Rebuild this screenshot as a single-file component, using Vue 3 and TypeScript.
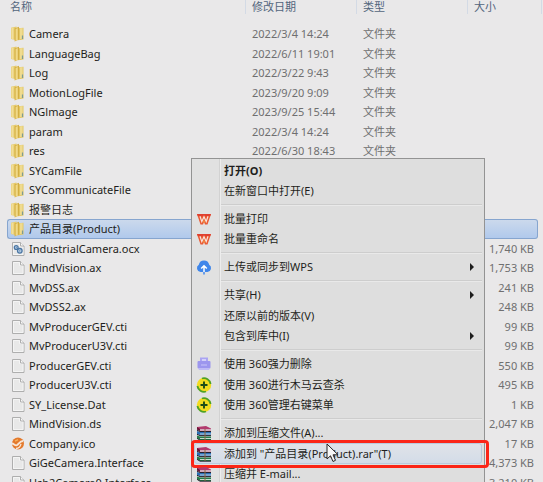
<script setup lang="ts">
type FileKind = 'folder' | 'file' | 'control' | 'brand'

interface FileRow {
  name: string
  kind: FileKind
  date?: string
  type?: string
  size?: string
}

interface MenuEntry {
  label: string
  icon?: 'wps' | 'cloud' | 'shredder' | 'shield' | 'archive'
  strong?: boolean
  submenu?: boolean
  active?: boolean
}

const selectedName = '产品目录(Product)'

const files: FileRow[] = [
  { name: 'Camera', kind: 'folder', date: '2022/3/4 14:24', type: '文件夹' },
  { name: 'LanguageBag', kind: 'folder', date: '2022/6/11 19:01', type: '文件夹' },
  { name: 'Log', kind: 'folder', date: '2022/3/22 9:43', type: '文件夹' },
  { name: 'MotionLogFile', kind: 'folder', date: '2023/9/20 9:09', type: '文件夹' },
  { name: 'NGlmage', kind: 'folder', date: '2023/9/25 15:44', type: '文件夹' },
  { name: 'param', kind: 'folder', date: '2022/3/4 14:24', type: '文件夹' },
  { name: 'res', kind: 'folder', date: '2022/6/30 18:43', type: '文件夹' },
  { name: 'SYCamFile', kind: 'folder' },
  { name: 'SYCommunicateFile', kind: 'folder' },
  { name: '报警日志', kind: 'folder' },
  { name: selectedName, kind: 'folder' },
  { name: 'IndustrialCamera.ocx', kind: 'control', size: '1,740 KB' },
  { name: 'MindVision.ax', kind: 'file', size: '1,753 KB' },
  { name: 'MvDSS.ax', kind: 'file', size: '241 KB' },
  { name: 'MvDSS2.ax', kind: 'file', size: '248 KB' },
  { name: 'MvProducerGEV.cti', kind: 'file', size: '99 KB' },
  { name: 'MvProducerU3V.cti', kind: 'file', size: '99 KB' },
  { name: 'ProducerGEV.cti', kind: 'file', size: '550 KB' },
  { name: 'ProducerU3V.cti', kind: 'file', size: '495 KB' },
  { name: 'SY_License.Dat', kind: 'file', size: '1 KB' },
  { name: 'MindVision.ds', kind: 'file', size: '2,047 KB' },
  { name: 'Company.ico', kind: 'brand', size: '17 KB' },
  { name: 'GiGeCamera.Interface', kind: 'file', size: '4,373 KB' },
  { name: 'Usb2Camera0.Interface', kind: 'file', size: '3,210 KB' },
]

const menuGroups: MenuEntry[][] = [
  [{ label: '打开(O)', strong: true }, { label: '在新窗口中打开(E)' }],
  [
    { label: '批量打印', icon: 'wps' },
    { label: '批量重命名', icon: 'wps' },
  ],
  [{ label: '上传或同步到WPS', icon: 'cloud', submenu: true }],
  [
    { label: '共享(H)', submenu: true },
    { label: '还原以前的版本(V)' },
    { label: '包含到库中(I)', submenu: true },
  ],
  [
    { label: '使用 360强力删除', icon: 'shredder' },
    { label: '使用 360进行木马云查杀', icon: 'shield' },
    { label: '使用 360管理右键菜单', icon: 'shield' },
  ],
  [
    { label: '添加到压缩文件(A)...', icon: 'archive' },
    { label: '添加到 "产品目录(Product).rar"(T)', icon: 'archive', active: true },
    { label: '压缩并 E-mail...', icon: 'archive' },
  ],
]
</script>

<template>
  <main class="explorer">
    <table class="files">
      <colgroup>
        <col />
        <col class="col-wide" />
        <col class="col-wide" />
        <col class="col-size" />
      </colgroup>
      <thead>
        <tr>
          <th scope="col"><span>名称</span></th>
          <th scope="col"><span>修改日期</span></th>
          <th scope="col"><span>类型</span></th>
          <th scope="col"><span>大小</span></th>
        </tr>
      </thead>
      <tbody>
        <tr v-for="f in files" :key="f.name" :class="{ selected: f.name === selectedName }">
          <td>
            <div class="name">
              <svg v-if="f.kind === 'folder'" class="icon" viewBox="0 0 16 16">
                <path d="M1 1.800 6.500.6v13.600L1 13z" fill="#e6cb6c" />
                <path d="M1.400 2 3.500 1.600v11.600l-2.100-.4z" fill="#f1de9a" />
                <path d="M8 2.200 13.500 1.800v11.800L8 14.200z" fill="#e2c561" />
                <path d="M10 2.200 12.600 2v10.600L10 13z" fill="#efdb90" />
                <path d="M4.600 2.600 9 .8v12.800l-4.400 1.900z" fill="#d3ae42" />
                <path d="M5.600 3 7.800 2v12l-2.200 1z" fill="#f0d988" />
                <path d="M12.500 9.500V13" stroke="#7f9b91" stroke-width="1.200" />
              </svg>
              <svg v-else-if="f.kind === 'brand'" class="icon" viewBox="0 0 16 16">
                <circle cx="8" cy="7.500" r="6" fill="#e4792c" />
                <path d="M2 7.500c2 .2 2.600 2.200 4.500 1.800C9 8.800 9.200 5 13 5" fill="none" stroke="#f7e5d5" stroke-width="1.800" />
                <path d="M6 12.500c3.500-.2 4.500-2.200 5-4.600" fill="none" stroke="#f7e5d5" stroke-width="1.300" />
                <path d="M5 5.200 8 3.700" stroke="#f4b35c" stroke-width="1.500" />
              </svg>
              <svg v-else class="icon" viewBox="0 0 16 16">
                <path d="M2.500 1.500h8l3.500 3.500v9.500H2.500z" fill="#e8e8e8" stroke="#aeaeae" />
                <path d="M3.500 2.500h6v3h3.500v8H3.500z" fill="none" stroke="#f4f4f4" />
                <path d="M10.500 1.500v3.500H14" fill="#f8f8f8" stroke="#aeaeae" />
                <g v-if="f.kind === 'control'" fill="#c3d7ea" stroke="#4a76a4" stroke-width="1.300">
                  <circle cx="6.200" cy="6.500" r="1.900" />
                  <circle cx="9.800" cy="9.800" r="2.300" />
                  <path d="M9.300 9.800h1M5.800 6.500h.8" />
                </g>
              </svg>
              <span>{{ f.name }}</span>
            </div>
          </td>
          <td>{{ f.date }}</td>
          <td>{{ f.type }}</td>
          <td class="size">{{ f.size }}</td>
        </tr>
      </tbody>
    </table>

    <nav class="menu" aria-label="右键菜单">
      <ul v-for="(group, g) in menuGroups" :key="g" class="group">
        <li v-for="item in group" :key="item.label" :class="{ active: item.active }">
          <button type="button" :class="{ strong: item.strong }">
            <span class="gutter">
              <svg v-if="item.icon === 'wps'" class="icon" viewBox="0 0 16 16">
                <path d="M1 3h14l-3.500 10.500H9L8 11l-1 2.500H4.500z" fill="#ea5a34" />
                <path d="M1 3h14l-.8 2.300H1.800z" fill="#e0402f" />
                <path d="M4 5.300 5.800 10.700 8 5.800l2.200 4.900L12 5.300" fill="none" stroke="#f9e4dc" stroke-width="1.200" />
                <path d="m8 8.300 1.400 3.200h-2.800z" fill="#f08c3c" />
              </svg>
              <svg v-else-if="item.icon === 'cloud'" class="icon" viewBox="0 0 16 16">
                <path d="M4.500 13A3.900 3.900 0 0 1 2.800 5.800 5.300 5.300 0 0 1 13.200 5.800 3.900 3.900 0 0 1 11.500 13z" fill="#3f86ea" />
                <path d="M8 13.500V7M5.200 9.500 8 6.700l2.800 2.800" fill="none" stroke="#fff" stroke-width="1.500" />
                <path d="M8 13v2.500" stroke="#3f86ea" stroke-width="1.500" />
              </svg>
              <svg v-else-if="item.icon === 'shredder'" class="icon" viewBox="0 0 16 16">
                <path d="M4 1.500h8V6H4z" fill="#aaa4f2" />
                <path d="M6 3h4v3H6z" fill="#d4d1f9" />
                <rect x="1.500" y="5" width="13" height="7.500" rx="1" fill="#9c96ee" />
                <path d="M2 12h12l-1 2H3z" fill="#bfbbf5" />
                <path d="M5 9h6" stroke="#c9c6f8" />
              </svg>
              <svg v-else-if="item.icon === 'shield'" class="icon" viewBox="0 0 16 16">
                <circle cx="8" cy="8" r="7.200" fill="#f4dc1f" />
                <path d="M6 1.500A6.800 6.800 0 0 1 14.600 7M10 14.500A6.800 6.800 0 0 1 1.400 9" fill="none" stroke="#4fa127" stroke-width="1.800" />
                <path d="M8 4.500v7M4.500 8h7" stroke="#1d4d18" stroke-width="1.900" />
              </svg>
              <svg v-else-if="item.icon === 'archive'" class="icon" viewBox="0 0 16 16">
                <path d="M1 2 10 1l5 2.500v2H4L1 4.500z" fill="#b23a6e" />
                <path d="M4 4.200h11v1.300H4z" fill="#d9c3cd" />
                <path d="M1 2 4 4v2L1 4.500z" fill="#6c1738" />
                <path d="m1 6 3 1h11v3H4L1 9z" fill="#286fb4" />
                <path d="M4 8.500h11v1H4z" fill="#c5d8e8" />
                <path d="m1 10.500 3 1h11V15H4l-3-2z" fill="#237d49" />
                <path d="M4 13h11v1H4z" fill="#c5ddcf" />
                <path d="m1 5.200 3 1.300h11M1 9.300l3 1.300h11M1 13.300l3 1.900h11" fill="none" stroke="#271f2c" />
                <path d="M9 4v11" stroke="#8d6640" />
              </svg>
            </span>
            <span class="label">{{ item.label }}</span>
            <svg v-if="item.submenu" class="arrow" viewBox="0 0 4 8"><path d="M0 0 4 4 0 8z" fill="#1d1d1d" /></svg>
          </button>
          <svg v-if="item.active" class="cursor" viewBox="0 0 13 20">
            <path d="M1 1v15l3.500-3.200L7 18.500l2.500-1.200L7 11.800h5z" fill="#f7f7f7" stroke="#252525" />
          </svg>
        </li>
      </ul>
    </nav>
  </main>
</template>

<style>
body {
  margin: 0;
  background: #e9e8e9;
}
</style>

<style scoped>
.explorer {
  position: relative;
  box-sizing: border-box;
  height: 100vh;
  padding: 0 5px 0 7px;
  overflow: hidden;
  background: #e9e8e9;
  color: #6f6f70;
  font: 11px/16px "Noto Sans", "Noto Sans CJK SC", sans-serif;
}

.files {
  width: 100%;
  table-layout: fixed;
  border-collapse: separate;
  border-spacing: 0;
}

.col-wide {
  width: 111px;
}

.col-size {
  width: 71px;
}

th {
  position: relative;
  height: 24px;
  padding: 0;
  vertical-align: top;
  text-align: left;
  font-weight: 400;
  color: #52657c;
}

th span {
  display: block;
  height: 14px;
  padding-left: 6px;
  line-height: 14px;
  border-left: 1px solid #d3dae5;
}

th:first-child span {
  padding-left: 2px;
  border-left-color: transparent;
}

th:last-child::after {
  content: "";
  position: absolute;
  top: 0;
  right: -4px;
  width: 1px;
  height: 14px;
  background: #d3dae5;
}

td {
  box-sizing: border-box;
  height: 19px;
  padding: 0 0 0 7px;
  white-space: nowrap;
}

tr:nth-child(odd) td {
  height: 20px;
}

td:first-child {
  padding-left: 3px;
}

.size {
  padding-right: 4px;
  text-align: right;
}

.name {
  display: flex;
  align-items: center;
  gap: 3px;
  color: #1e1e20;
}

.icon {
  display: block;
  flex: none;
  width: 16px;
  height: 16px;
}

.selected td {
  border: solid #86a5cf;
  border-width: 1px 0;
  background: linear-gradient(#cbd9ec, #b0c9ec);
}

.selected td:first-child {
  padding-left: 2px;
  border-left-width: 1px;
  border-radius: 3px 0 0 3px;
}

.selected td:last-child {
  border-right-width: 1px;
  border-radius: 0 3px 3px 0;
}

.menu {
  position: absolute;
  top: 158px;
  left: 191px;
  box-sizing: border-box;
  width: 294px;
  padding: 2px;
  border: 1px solid #939393;
  background: linear-gradient(90deg, #e1e1e1 27px, #d2d2d2 27px 28px, #ededed 28px 29px, #dedede 29px);
}

.group {
  margin: 0;
  padding: 0;
  list-style: none;
}

.group + .group::before {
  content: "";
  display: block;
  height: 1px;
  margin: 3px 0 3px 27px;
  border-bottom: 1px solid #e9e9e9;
  background: #cdcdcd;
}

li {
  position: relative;
  height: 20px;
}

li:nth-child(2):nth-last-child(2) {
  height: 21px;
}

button {
  display: flex;
  align-items: center;
  box-sizing: border-box;
  width: 100%;
  height: 100%;
  padding: 0 7px 0 1px;
  border: 1px solid transparent;
  border-radius: 3px;
  background: none;
  color: #1e1e20;
  font: inherit;
  text-align: left;
  white-space: nowrap;
}

.strong {
  font-weight: 700;
}

.gutter {
  flex: none;
  width: 28px;
}

.label {
  flex: 1;
}

.arrow {
  flex: none;
  width: 4px;
  height: 8px;
}

.active button {
  border-color: #b9cbdf;
  background: linear-gradient(#e0e3e8, #d3dce8);
}

.active::after {
  content: "";
  position: absolute;
  inset: -3px -7px -4px -3px;
  border: 3px solid #fb2618;
  border-radius: 4px;
  pointer-events: none;
}

.cursor {
  position: absolute;
  top: 0;
  left: 132px;
  width: 13px;
  height: 20px;
}
</style>
